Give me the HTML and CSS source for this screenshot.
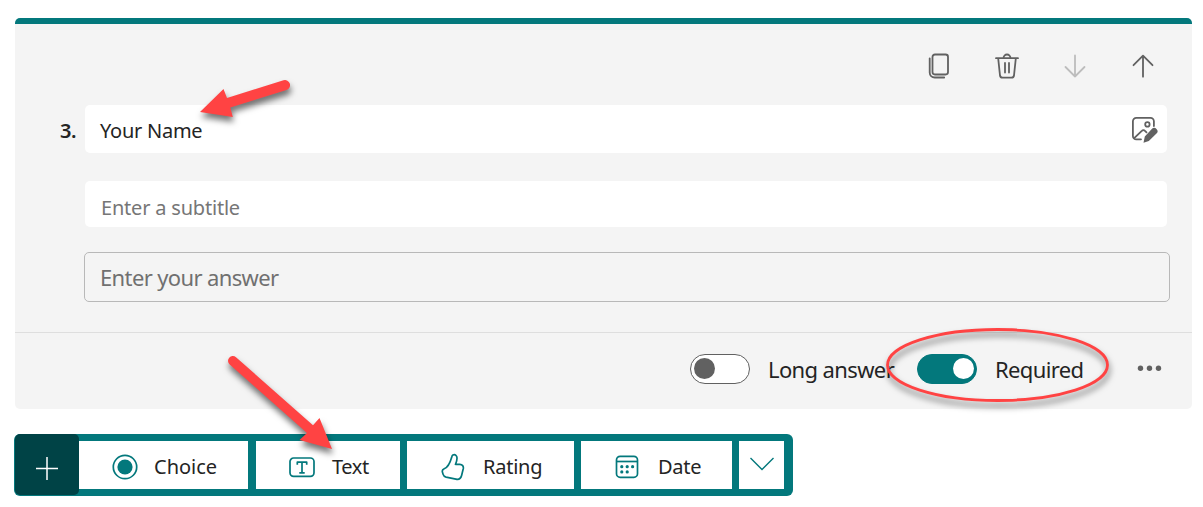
FILE: index.html
```html
<!DOCTYPE html>
<html lang="en">
<head>
<meta charset="utf-8">
<title>Form question editor</title>
<link rel="stylesheet" href="styles.css">
</head>
<body>
<main class="page">
  <section class="question">
    <div class="actions">
      <svg class="icon" viewBox="0 0 28 28"><rect x="7.500" y="2.500" width="15.500" height="20" rx="2.400"/><path d="M4.700 6.300v14.200a5 5 0 0 0 5 5h9.500"/></svg>
      <svg class="icon" viewBox="0 0 28 28"><path d="M3 6.200h22M10.500 6a3.500 3.500 0 0 1 7 0M5.200 6.500l1.800 17a2.600 2.600 0 0 0 2.600 2.200h8.800a2.600 2.600 0 0 0 2.600-2.200l1.800-17M12 11v9.500M16 11v9.500"/></svg>
      <svg class="icon icon-disabled" viewBox="0 0 28 28"><path d="M14 3.500V24.500M4.500 15l9.500 9.500 9.500-9.500"/></svg>
      <svg class="icon" viewBox="0 0 28 28"><path d="M14 24.700V3.700M4.500 13.200L14 3.700l9.500 9.500"/></svg>
    </div>
    <div class="title-row">
      <span class="number">3.</span>
      <div class="field title-field">
        <span class="t-name">Your Name</span>
        <svg class="icon" viewBox="0 0 28 28"><path d="M11 24.300H6.300a3.400 3.400 0 0 1-3.400-3.400V6.300a3.400 3.400 0 0 1 3.400-3.400h14.200a3.400 3.400 0 0 1 3.400 3.400V11M4.200 23.200l7.600-7.400a2.200 2.200 0 0 1 3.200 0l1.500 1.500"/><circle cx="17.400" cy="9.400" r="2.200"/><path class="solid" d="M21.800 13.900a3.100 3.100 0 0 1 4.700 4.700l-7.700 7.500-5.300 1.700 1.300-6.300z"/></svg>
      </div>
    </div>
    <div class="field subtitle-field"><span class="t-sub">Enter a subtitle</span></div>
    <div class="answer-field"><span class="t-answer">Enter your answer</span></div>
    <div class="footer">
      <span class="toggle"><span class="knob"></span></span>
      <span class="label label-long">Long answer</span>
      <span class="toggle toggle-on"><span class="knob"></span></span>
      <span class="label label-req">Required</span>
      <svg class="more" viewBox="0 0 26 8"><circle cx="3.500" cy="3.200" r="2.700"/><circle cx="12.500" cy="3.200" r="2.700"/><circle cx="21.500" cy="3.200" r="2.700"/></svg>
    </div>
  </section>
  <nav class="toolbar">
    <div class="add"><svg viewBox="0 0 24 24"><path d="M12 1v23M1 12.500h22"/></svg></div>
    <div class="cell choice"><svg class="tool-icon" viewBox="0 0 28 28"><circle cx="14" cy="14" r="11.700"/><circle class="dot" cx="14" cy="14" r="7.600"/></svg><span>Choice</span></div>
    <div class="cell text"><svg class="tool-icon" viewBox="0 0 28 28"><rect x="2" y="5" width="24" height="18.400" rx="3.600"/><path d="M9.300 11.800V9.200h9.400v2.600M14 9.200v10.600M11.300 19.800h5.400"/></svg><span>Text</span></div>
    <div class="cell rating"><svg class="tool-icon" viewBox="0 0 28 28"><path d="M13.900 2.100c2.300-1.200 4.300.7 4.100 3.200 0 2.200-.6 4-1.500 6h4.300c2.600.2 3.900 1.900 3.500 4.200l-1.700 7c-.7 2.800-3.100 4.200-5.700 3.600L7.100 24.100c-1.700-.4-2.600-1.200-3-2.700l-.7-2.500c-.4-1.500.2-2.500 1.800-3.100C9.400 14.300 11.400 8.900 12.700 4.300c.2-1 .5-1.800 1.200-2.200z"/></svg><span>Rating</span></div>
    <div class="cell date"><svg class="tool-icon" viewBox="0 0 28 28"><rect x="3.500" y="3.300" width="21" height="21" rx="3.600"/><path d="M3.500 8.500h21"/><g class="dots"><circle cx="8.800" cy="13.700" r="1.600"/><circle cx="14.200" cy="13.700" r="1.600"/><circle cx="19.600" cy="13.700" r="1.600"/><circle cx="8.800" cy="18.900" r="1.600"/><circle cx="14.200" cy="18.900" r="1.600"/></g></svg><span>Date</span></div>
    <div class="cell expand"><svg class="chevron" viewBox="0 0 26 16"><path d="M1.500 2L13 13.500 24.500 2"/></svg></div>
  </nav>
  <svg class="annotations" viewBox="0 0 1203 507">
    <path class="arrow" d="M200 112L223.500 89l3.500 9L283.500 80.300a5 5 0 0 1 3 9.600L230.300 107.500l2.500 9.500z"/>
    <path class="arrow" d="M332 449l-32.500-9 7.500-7L229.700 364.500a4.800 4.800 0 0 1 6.300-7.300L313 425.300l6.500-7.300z"/>
    <ellipse class="ring" cx="997.500" cy="365" rx="110" ry="35.500"/>
  </svg>
</main>
</body>
</html>
```
FILE: styles.css
```css
* { box-sizing: border-box; }
body {
  margin: 0;
  background: #fff;
  color: #242424;
  font-family: "Noto Sans", "Open Sans", sans-serif;
  font-size: 20px;
  line-height: 28px;
}
svg { display: block; flex: none; }
.page { position: relative; width: 1203px; height: 507px; padding: 18px 11px 0 14px; overflow: hidden; }
.question {
  height: 391px;
  margin-left: 1px;
  width: 1177px;
  background: #f4f4f4;
  border-top: 6px solid #03787c;
  border-radius: 5px;
}
.actions { display: flex; justify-content: flex-end; gap: 40px; padding: 28px 35px 0 0; height: 81px; }
.icon { width: 28px; height: 28px; fill: none; stroke: #616161; stroke-width: 1.8; stroke-linecap: round; stroke-linejoin: round; }
.icon-disabled { stroke: #bdbdbd; }
.icon .solid { fill: #616161; stroke: none; }
.title-row { display: flex; align-items: center; padding-left: 45px; }
.number { width: 25px; font-weight: 600; padding-top: 3px; letter-spacing: -0.4px; }
.field { background: #fff; border-radius: 5px; width: 1082px; display: flex; align-items: center; }
.title-field { height: 48px; padding: 0 9px 0 15px; justify-content: space-between; }
.t-name { letter-spacing: -0.25px; padding-top: 4px; }
.t-sub { letter-spacing: -0.2px; }
.subtitle-field { margin: 28px 0 0 70px; height: 46px; padding: 8px 0 0 16px; color: #767676; }
.answer-field {
  margin: 25px 0 0 69px; width: 1086px; height: 50px; padding: 0 0 1px 15px;
  display: flex; align-items: center;
  border: 1px solid #b8b8b8; border-radius: 5px;
  font-size: 22px; letter-spacing: -0.63px; color: #707070;
}
.footer { display: flex; align-items: center; margin-top: 30px; height: 77px; padding: 0 27px 5px 675px; border-top: 1px solid #dedede; font-size: 22px; letter-spacing: -0.62px; }
.toggle { width: 60px; height: 30px; border: 1px solid #616161; border-radius: 15px; background: #fff; padding: 3px; display: flex; flex: none; }
.knob { width: 21px; height: 21px; border-radius: 50%; background: #616161; }
.toggle-on { background: #03787c; border-color: #03787c; justify-content: flex-end; padding-right: 2px; }
.toggle-on .knob { background: #fff; }
.label { padding-top: 1px; white-space: nowrap; }
.label-long { margin-left: 18px; width: 149px; }
.label-req { margin-left: 18px; width: 142px; }
.more { width: 26px; height: 8px; fill: #616161; }
.toolbar { display: flex; width: 779px; height: 62px; margin-top: 25px; background: #03787c; border-radius: 6px; align-items: center; padding-left: 1px; letter-spacing: -0.25px; }
.add { width: 64px; height: 61px; align-self: flex-start; border-radius: 5px; background: #004346; display: flex; align-items: center; justify-content: center; padding-top: 6px; }
.add svg { width: 24px; height: 24px; fill: none; stroke: #fff; stroke-width: 1.5; }
.cell { height: 48px; background: #fff; display: flex; align-items: center; padding-top: 3px; }
.tool-icon { width: 28px; height: 28px; fill: none; stroke: #03787c; stroke-width: 1.7; stroke-linejoin: round; }
.tool-icon .dot, .dots { fill: #03787c; stroke: none; }
.choice { width: 169px; padding-left: 32px; gap: 15px; letter-spacing: 0; }
.text { width: 144px; margin-left: 8px; padding-left: 32px; gap: 16px; letter-spacing: -0.4px; }
.rating { width: 167px; margin-left: 7px; padding-left: 32px; gap: 16px; }
.date { width: 151px; margin-left: 7px; padding-left: 32px; gap: 17px; }
.expand { width: 45px; margin-left: 7px; justify-content: center; padding-top: 0; padding-bottom: 2px; }
.chevron { width: 26px; height: 16px; fill: none; stroke: #03787c; stroke-width: 1.4; }
.annotations { position: absolute; inset: 0; width: 1203px; height: 507px; pointer-events: none; filter: drop-shadow(1px 5px 3px rgba(0, 0, 0, 0.55)); }
.arrow { fill: #ff4343; }
.ring { fill: none; stroke: #ff4343; stroke-width: 2.8; }
```
